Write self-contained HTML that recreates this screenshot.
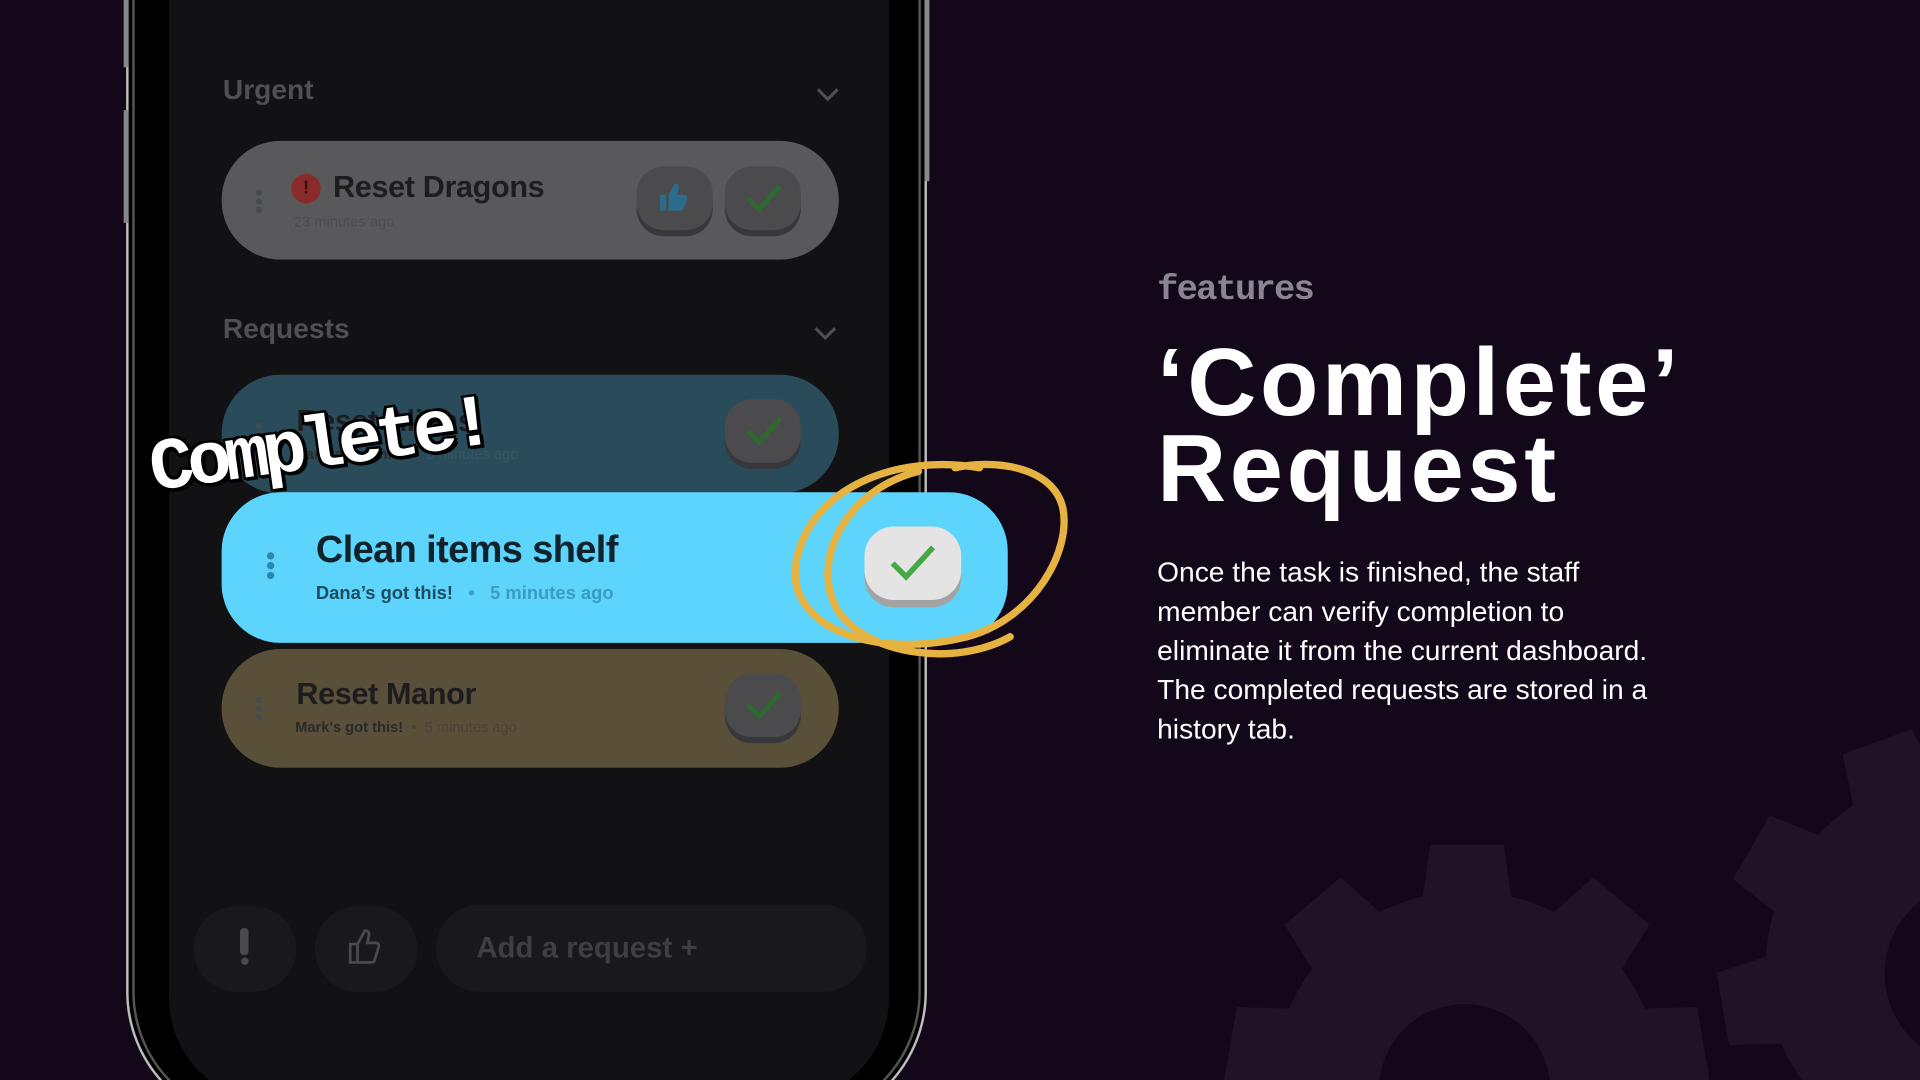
<!DOCTYPE html>
<html><head><meta charset="utf-8"><style>
html,body{margin:0;padding:0;background:#13081a;overflow:hidden;width:1920px;height:1080px}
#w{position:absolute;left:0;top:0;width:1568px;height:882px;transform:scale(1.22449);transform-origin:0 0;background:#13081a;overflow:hidden;font-family:"Liberation Sans",sans-serif}
.a{position:absolute}
.lbl{font-size:23px;font-weight:bold;color:#4f4f54}
.card{position:absolute;left:181px;width:504px;height:97px;border-radius:48px}
.t{position:absolute;font-weight:bold;font-size:25px;color:#1d1d1f;letter-spacing:-0.3px}
.s{position:absolute;font-size:12px;color:#2a2a2a;font-weight:bold}
.btn{position:absolute;width:62px;height:52px;border-radius:22px;background:#4b4b4d;box-shadow:0 5px 0 #38383a}
.dots{position:absolute;width:5px}
.dots i{display:block;width:5px;height:5px;border-radius:50%;background:#444a52;margin-bottom:2px}
</style></head><body><div id="w">
<svg class="a" style="left:0;top:0" width="1568" height="882">
<g fill="#1f1426">
 <g transform="translate(1198,886)">
  <circle r="158"/>
  <g id="teeth"><polygon points="-38,-140 -30,-196 30,-196 38,-140"/><polygon transform="rotate(40)" points="-38,-140 -30,-196 30,-196 38,-140"/><polygon transform="rotate(80)" points="-38,-140 -30,-196 30,-196 38,-140"/><polygon transform="rotate(120)" points="-38,-140 -30,-196 30,-196 38,-140"/><polygon transform="rotate(160)" points="-38,-140 -30,-196 30,-196 38,-140"/><polygon transform="rotate(200)" points="-38,-140 -30,-196 30,-196 38,-140"/><polygon transform="rotate(240)" points="-38,-140 -30,-196 30,-196 38,-140"/><polygon transform="rotate(280)" points="-38,-140 -30,-196 30,-196 38,-140"/><polygon transform="rotate(320)" points="-38,-140 -30,-196 30,-196 38,-140"/></g>
  <circle r="70" fill="#13081a" cx="-2" cy="4"/>
 </g>
 <g transform="translate(1600,790) rotate(20)">
  <circle r="158"/>
  <use href="#teeth"/>
  <circle r="75" fill="#13081a" cx="15" cy="0"/>
 </g>
</g>
</svg>
<!-- phone -->
<div class="a" style="left:103px;top:-200px;width:654px;height:1120px;border-radius:110px;border:2px solid #bdbdbd;background:#000;box-sizing:border-box"></div>
<div class="a" style="left:108px;top:-200px;width:644px;height:1115px;border-radius:105px;border:2px solid #555;box-sizing:border-box"></div>
<div class="a" style="left:138px;top:-200px;width:588px;height:1100px;border-radius:85px;background:#121214"></div>
<div class="a" style="left:101px;top:0;width:4px;height:55px;background:#888"></div>
<div class="a" style="left:101px;top:90px;width:4px;height:92px;background:#888"></div>
<div class="a" style="left:755px;top:0;width:4px;height:148px;background:#888"></div>

<div class="a lbl" style="left:182px;top:60px">Urgent</div>
<div class="a lbl" style="left:182px;top:255px">Requests</div>
<svg class="a" style="left:666px;top:70px" width="20" height="14"><path d="M2 3 L10 11 L18 3" fill="none" stroke="#4f4f54" stroke-width="2.5"/></svg>
<svg class="a" style="left:664px;top:265px" width="20" height="14"><path d="M2 3 L10 11 L18 3" fill="none" stroke="#4f4f54" stroke-width="2.5"/></svg>

<div class="card" style="top:115px;background:#59595b"></div>
<div class="dots" style="left:209px;top:155px"><i></i><i></i><i></i></div>
<div class="a" style="left:238px;top:142px;width:24px;height:24px;border-radius:50%;background:#8a2b2b;color:#3a1010;font-weight:bold;font-size:15px;text-align:center;line-height:24px">!</div>
<div class="t" style="left:272px;top:139px">Reset Dragons</div>
<div class="s" style="left:240px;top:174px;color:#4c4c4e;font-weight:normal">23 minutes ago</div>
<div class="btn" style="left:520px;top:136px"></div>
<div class="btn" style="left:592px;top:136px"></div>
<svg class="a" style="left:536px;top:148px" width="28" height="26"><path d="M3 11h5v13H3z M10 11 l5 -9 c3 0 4 2 3 5 l-1 4 h6 c2 0 3 2 2 4 l-3 8 c-1 1 -2 1 -3 1 H10z" fill="#2a6d8a"/></svg>
<svg class="a" style="left:608px;top:148px" width="32" height="28"><path d="M3 14 L12 23 L29 4" fill="none" stroke="#2e6a2e" stroke-width="4"/></svg>

<div class="card" style="top:306px;background:#2a4c5a"></div>
<div class="dots" style="left:209px;top:345px"><i></i><i></i><i></i></div>
<div class="t" style="left:242px;top:330px">Reset Aliens</div>
<div class="s" style="left:241px;top:364px">Dana's got this! &nbsp;<span style="color:#37505a">•</span>&nbsp; <span style="color:#375562;font-weight:normal">5 minutes ago</span></div>
<div class="btn" style="left:592px;top:326px"></div>
<svg class="a" style="left:608px;top:338px" width="32" height="28"><path d="M3 14 L12 23 L29 4" fill="none" stroke="#2e6a2e" stroke-width="4"/></svg>

<div class="card" style="top:530px;background:#5a4f39"></div>
<div class="dots" style="left:209px;top:569px"><i></i><i></i><i></i></div>
<div class="t" style="left:242px;top:553px">Reset Manor</div>
<div class="s" style="left:241px;top:587px">Mark's got this! &nbsp;<span style="color:#4a4230">•</span>&nbsp; <span style="color:#4b4333;font-weight:normal">5 minutes ago</span></div>
<div class="btn" style="left:592px;top:550px"></div>
<svg class="a" style="left:608px;top:562px" width="32" height="28"><path d="M3 14 L12 23 L29 4" fill="none" stroke="#2e6a2e" stroke-width="4"/></svg>

<!-- highlighted card -->
<div class="a" style="left:181px;top:402px;width:642px;height:123px;border-radius:48px;background:#5cd4fc"></div>
<div class="dots" style="left:218px;top:451px"><i style="background:#2a88ad;width:6px;height:6px"></i><i style="background:#2a88ad;width:6px;height:6px"></i><i style="background:#2a88ad;width:6px;height:6px"></i></div>
<div class="a" style="left:258px;top:431px;font-size:31px;font-weight:bold;color:#10232b;letter-spacing:-0.5px">Clean items shelf</div>
<div class="a" style="left:258px;top:476px;font-size:15px;font-weight:bold;color:#1d4d60">Dana’s got this! &nbsp;&nbsp;<span style="color:#3aa0c6">•</span>&nbsp;&nbsp; <span style="color:#3a9cc1">5 minutes ago</span></div>
<div class="a" style="left:706px;top:430px;width:79px;height:60px;border-radius:24px;background:#e4e4e4;box-shadow:0 6px 0 #a3a3a3"></div>
<svg class="a" style="left:725px;top:442px" width="42" height="34"><path d="M4 18 L15 29 L37 5" fill="none" stroke="#44a944" stroke-width="4.5"/></svg>

<!-- scribble -->
<svg class="a" style="left:630px;top:360px" width="260" height="200" overflow="visible">
<g fill="none" stroke="#e6b342" stroke-width="6" stroke-linecap="round">
<path d="M170 22 C100 10 30 40 20 100 C12 150 80 180 160 160 C215 145 245 90 238 55 C230 20 180 15 150 22"/>
<path d="M120 25 C60 40 30 100 55 140 C80 175 150 185 195 160"/>
</g></svg>

<!-- Complete! -->
<div class="a" style="left:118px;top:352px;transform:rotate(-8deg);transform-origin:0 0;font-family:'Liberation Mono',monospace;font-weight:bold;font-size:60px;color:#fff;letter-spacing:-5px;text-shadow:3px 3px 0 #000,-2px -2px 0 #000,2px -2px 0 #000,-2px 2px 0 #000,0 3px 0 #000,3px 0 0 #000">Complete!</div>

<!-- bottom bar -->
<div class="a" style="left:158px;top:740px;width:84px;height:70px;border-radius:40px;background:#19191b"></div>
<div class="a" style="left:257px;top:740px;width:84px;height:70px;border-radius:40px;background:#19191b"></div>
<div class="a" style="left:356px;top:739px;width:352px;height:71px;border-radius:36px;background:#19191b"></div>
<div class="a" style="left:196px;top:758px;width:7px;height:22px;border-radius:3px;background:#4a4a4c"></div>
<div class="a" style="left:197px;top:782px;width:6px;height:6px;border-radius:50%;background:#4a4a4c"></div>
<svg class="a" style="left:284px;top:758px" width="32" height="30"><path d="M2 13h6v15H2z M8 13 l6 -11 c3 0 4 2 3 5 l-1 5 h7 c2 0 3 2 2 4 l-3 10 c0 1 -1 2 -3 2 H8" fill="none" stroke="#4a4a4c" stroke-width="2.2"/></svg>
<div class="a" style="left:389px;top:761px;font-size:24px;font-weight:bold;color:#3f3f42">Add a request +</div>

<!-- right text -->
<div class="a" style="left:945px;top:220px;font-family:'Liberation Mono',monospace;font-weight:bold;font-size:29px;color:#8a8590;letter-spacing:-1.5px">features</div>
<div class="a" style="left:945px;top:277px;font-size:78px;font-weight:bold;color:#fff;line-height:70px;letter-spacing:3px;white-space:nowrap">‘Complete’<br>Request</div>
<div class="a" style="left:945px;top:451px;font-size:23px;color:#fff;line-height:32px;white-space:nowrap">Once the task is finished, the staff<br>member can verify completion to<br>eliminate it from the current dashboard.<br>The completed requests are stored in a<br>history tab.</div>
</div></body></html>
